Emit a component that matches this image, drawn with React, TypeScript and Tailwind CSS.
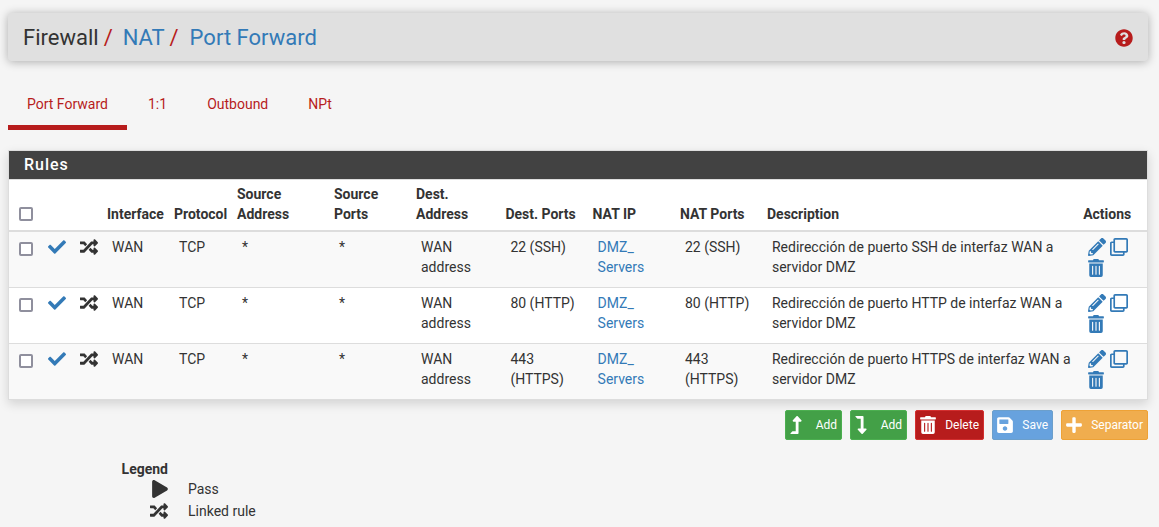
import React from "react";
import {
  FaCheck,
  FaLevelDownAlt,
  FaLevelUpAlt,
  FaPencilAlt,
  FaPlay,
  FaPlus,
  FaQuestionCircle,
  FaRandom,
  FaRegClone,
  FaSave,
  FaTrashAlt,
} from "react-icons/fa";

type Rule = { ports: string; description: string };

const rules: Rule[] = [
  { ports: "22 (SSH)", description: "Redirección de puerto SSH de interfaz WAN a servidor DMZ" },
  { ports: "80 (HTTP)", description: "Redirección de puerto HTTP de interfaz WAN a servidor DMZ" },
  { ports: "443 (HTTPS)", description: "Redirección de puerto HTTPS de interfaz WAN a servidor DMZ" },
];

const tabs = ["Port Forward", "1:1", "Outbound", "NPt"];

function Checkbox() {
  return (
    <input
      type="checkbox"
      className="block size-[14px] appearance-none rounded-[2px] border-2 border-[#8f8f9d] bg-white"
    />
  );
}

function Head({ children }: { children?: React.ReactNode }) {
  return (
    <th className="border-b-2 border-[#ddd] px-[5px] pt-1 pb-[6px] text-left align-bottom font-bold">
      {children}
    </th>
  );
}

function Cell({ children }: { children?: React.ReactNode }) {
  return <td className="border-b border-[#ddd] pt-[5px] pl-[10px] align-top">{children}</td>;
}

function RuleRow({ rule }: { rule: Rule }) {
  return (
    <tr className="h-14 odd:bg-[#f9f9f9]">
      <Cell>
        <div className="pt-[5px]">
          <Checkbox />
        </div>
      </Cell>
      <Cell>
        <FaCheck className="mt-px size-[18px] text-[#337ab7]" />
      </Cell>
      <Cell>
        <FaRandom className="mt-px size-[18px]" />
      </Cell>
      <Cell>WAN</Cell>
      <Cell>TCP</Cell>
      <Cell>*</Cell>
      <Cell>*</Cell>
      <Cell>
        WAN
        <br />
        address
      </Cell>
      <Cell>{rule.ports}</Cell>
      <Cell>
        <a href="#" className="text-[#337ab7]">
          DMZ_
          <br />
          Servers
        </a>
      </Cell>
      <Cell>{rule.ports}</Cell>
      <Cell>{rule.description}</Cell>
      <Cell>
        <div className="flex w-11 flex-wrap gap-x-1 gap-y-[3px] pt-px text-[#337ab7]">
          <FaPencilAlt className="size-[18px]" />
          <FaRegClone className="size-[18px]" />
          <FaTrashAlt className="h-[18px] w-4" />
        </div>
      </Cell>
    </tr>
  );
}

function ActionButton({
  icon,
  label,
  className,
}: {
  icon: React.ReactNode;
  label: string;
  className: string;
}) {
  return (
    <button
      className={`flex h-[30px] items-center justify-between rounded-[2px] border pr-1 text-[12px] text-white ${className}`}
    >
      {icon}
      <span>{label}</span>
    </button>
  );
}

export default function App() {
  return (
    <div className="h-[527px] overflow-hidden bg-[#f5f5f5] px-2 pt-[13px] font-['Roboto',sans-serif] text-[14px] leading-5 text-[#333]">
      <header className="mr-[3px] flex h-12 items-center justify-between rounded-[4px] bg-[#e0e0e0] pt-px pr-[15px] pl-[15px] shadow-[0_1px_10px_rgba(0,0,0,0.3)]">
        <div className="flex pt-px text-[22px] leading-6">
          <span>Firewall</span>
          <span className="ml-[5px] w-5 text-[#b71c1c]">/</span>
          <a href="#" className="-ml-px text-[#337ab7]">NAT</a>
          <span className="ml-[5px] w-5 text-[#b71c1c]">/</span>
          <a href="#" className="text-[#337ab7]">Port Forward</a>
        </div>
        <FaQuestionCircle className="size-[18px] text-[#b71c1c]" />
      </header>

      <nav className="mt-[23px] flex h-[46px] text-[#b71c1c]">
        {tabs.map((tab, i) => (
          <a
            key={tab}
            href="#"
            className={`border-b-[5px] pt-[10px] ${
              i === 0 ? "mr-px w-[119px] border-[#b71c1c] pl-[19px]" : "border-transparent px-5"
            }`}
          >
            {tab}
          </a>
        ))}
      </nav>

      <section className="mt-5 mr-[3px] border border-[#ddd] bg-white shadow-[0_4px_10px_rgba(0,0,0,0.14)]">
        <h2 className="h-7 bg-[#424242] pt-1 pl-[15px] text-[16px] leading-5 font-medium tracking-[1px] text-white">
          Rules
        </h2>
        <table className="-mb-px w-full table-fixed border-separate border-spacing-0 border-t border-[#ddd]">
          <colgroup>
            <col className="w-[29px]" />
            <col className="w-[32px]" />
            <col className="w-[32px]" />
            <col className="w-[67px]" />
            <col className="w-[63px]" />
            <col className="w-[97px]" />
            <col className="w-[82px]" />
            <col className="w-[89.4px]" />
            <col className="w-[87.2px]" />
            <col className="w-[87.4px]" />
            <col className="w-[87px]" />
            <col className="w-[316.2px]" />
            <col className="w-[68.8px]" />
          </colgroup>
          <thead>
            <tr className="h-[52px]">
              <Head>
                <div className="pb-[3px] pl-[5px]">
                  <Checkbox />
                </div>
              </Head>
              <Head />
              <Head />
              <Head>Interface</Head>
              <Head>Protocol</Head>
              <Head>Source<br />Address</Head>
              <Head>Source<br />Ports</Head>
              <Head>Dest.<br />Address</Head>
              <Head>Dest. Ports</Head>
              <Head>NAT IP</Head>
              <Head>NAT Ports</Head>
              <Head>Description</Head>
              <Head>Actions</Head>
            </tr>
          </thead>
          <tbody>
            {rules.map((rule) => (
              <RuleRow key={rule.ports} rule={rule} />
            ))}
          </tbody>
        </table>
      </section>

      <div className="mt-[10px] mr-[3px] flex justify-end gap-2">
        <ActionButton
          icon={<FaLevelUpAlt className="h-[18px] w-auto" />}
          label="Add"
          className="w-[57px] border-[#4caf50] bg-[#43a047] pl-px"
        />
        <ActionButton
          icon={<FaLevelDownAlt className="h-[18px] w-auto" />}
          label="Add"
          className="w-[57px] border-[#4caf50] bg-[#43a047] pl-px"
        />
        <ActionButton
          icon={<FaTrashAlt className="h-[18px] w-auto" />}
          label="Delete"
          className="w-[69px] border-[#d32f2f] bg-[#b71c1c] pl-[3px]"
        />
        <ActionButton
          icon={<FaSave className="h-[18px] w-auto" />}
          label="Save"
          className="w-[61px] border-[#6c9fcb] bg-[#67a2de] pl-[3px]"
        />
        <ActionButton
          icon={<FaPlus className="h-[18px] w-auto" />}
          label="Separator"
          className="w-[87px] border-[#eea236] bg-[#f0ad4e] pl-[3px]"
        />
      </div>

      <dl className="mt-[19px] grid w-[300px] grid-cols-[160px_1fr] gap-x-5">
        <dt className="h-5 text-right font-bold">Legend</dt>
        <dd />
        <dt className="flex h-[22px] justify-end pt-px">
          <FaPlay className="-mr-px h-[18px] w-auto" />
        </dt>
        <dd>Pass</dd>
        <dt className="flex h-[22px] justify-end pt-px">
          <FaRandom className="size-[18px]" />
        </dt>
        <dd>Linked rule</dd>
      </dl>
    </div>
  );
}
